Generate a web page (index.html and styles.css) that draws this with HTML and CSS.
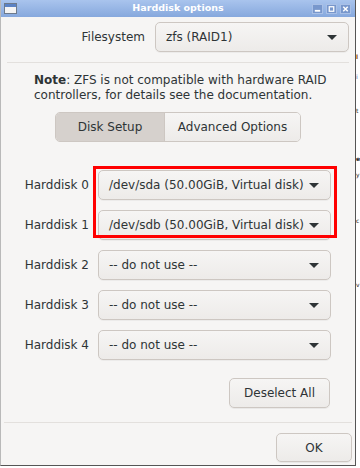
FILE: index.html
```html
<!DOCTYPE html>
<html lang="en">
<head>
  <meta charset="UTF-8">
  <title>Harddisk options</title>
  <link rel="stylesheet" href="styles.css">
</head>
<body>
  <div class="screen">
    <div class="window">
      <!-- Barra de titulo -->
      <div class="titlebar">
        <svg class="win-icon" width="13" height="11" viewBox="0 0 13 11">
          <rect x="0.5" y="0.5" width="12" height="10" fill="#f4f4f4" stroke="#6d7a8c"/>
          <rect x="1" y="1" width="11" height="3" fill="#5b82c4"/>
        </svg>
        <span class="title">Harddisk options</span>
        <div class="wm-buttons">
          <span class="wm-btn"><svg width="10" height="10" viewBox="0 0 10 10"><rect x="2" y="6" width="6" height="2" fill="#fff"/></svg></span>
          <span class="wm-btn"><svg width="10" height="10" viewBox="0 0 10 10"><rect x="2.5" y="2.5" width="5" height="5" fill="none" stroke="#fff" stroke-width="1.4"/></svg></span>
          <span class="wm-btn"><svg width="10" height="10" viewBox="0 0 10 10"><path d="M2.5 2.5 L7.5 7.5 M7.5 2.5 L2.5 7.5" stroke="#fff" stroke-width="1.6"/></svg></span>
        </div>
      </div>

      <div class="content">
        <div class="fs-row">
          <span class="label">Filesystem</span>
          <div class="combo fs-combo"><span>zfs (RAID1)</span><i class="arrow"></i></div>
        </div>

        <hr class="sep">

        <p class="note"><b>Note</b>: ZFS is not compatible with hardware RAID<br>controllers, for details see the documentation.</p>

        <div class="tabs">
          <span class="tab active">Disk Setup</span>
          <span class="tab">Advanced Options</span>
        </div>

        <div class="disks">
          <div class="hl-box"></div>
          <div class="disk-row"><span class="label">Harddisk 0</span><div class="combo"><span>/dev/sda (50.00GiB, Virtual disk)</span><i class="arrow"></i></div></div>
          <div class="disk-row"><span class="label">Harddisk 1</span><div class="combo"><span>/dev/sdb (50.00GiB, Virtual disk)</span><i class="arrow"></i></div></div>
          <div class="disk-row"><span class="label">Harddisk 2</span><div class="combo"><span>-- do not use --</span><i class="arrow"></i></div></div>
          <div class="disk-row"><span class="label">Harddisk 3</span><div class="combo"><span>-- do not use --</span><i class="arrow"></i></div></div>
          <div class="disk-row"><span class="label">Harddisk 4</span><div class="combo"><span>-- do not use --</span><i class="arrow"></i></div></div>
        </div>

        <div class="deselect-row">
          <span class="btn deselect">Deselect All</span>
        </div>
      </div>

      <hr class="sep bottom-sep">

      <div class="actions">
        <span class="btn ok">OK</span>
      </div>
    </div>

    <!-- Resto da pagina por tras da janela -->
    <div class="behind">
      <span class="c1">l</span>
      <span class="c2">i</span>
      <span class="c3">t</span>
      <span class="c4">e</span>
      <span class="c5">y</span>
      <span class="c6">c</span>
      <span class="c7">v</span>
    </div>
  </div>
</body>
</html>
```

FILE: styles.css
```css
* { margin:0; padding:0; box-sizing:border-box; }
html, body {
  width:360px; height:468px;
  overflow:hidden;
  background:#fff;
  font-family:"DejaVu Sans", sans-serif;
  font-size:12px;
  color:#2e3436;
}
.screen {
  display:flex;
  width:360px; height:468px;
}
/* Janela */
.window {
  width:356px; height:466px;
  flex:none;
  display:flex; flex-direction:column;
  background:#f6f5f4;
  border-left:1px solid #b9b9b9;
  border-right:1px solid #555;
  border-bottom:1px solid #555;
}
.titlebar {
  height:17px; flex:none;
  display:flex; align-items:center;
  padding:0 4px 0 3px;
  background:linear-gradient(#a9c4ed, #86a8dd);
  position:relative;
}
.win-icon { display:block; }
.title {
  position:absolute; left:0; right:0; top:2px;
  text-align:center;
  color:#fff; font-weight:bold; font-size:9.5px;
}
.wm-buttons { margin-left:auto; display:flex; gap:3px; }
.wm-btn {
  width:11px; height:10px;
  display:flex; align-items:center; justify-content:center;
  background:#7897cc;
  border:1px solid #a9c0e6;
}
.content { padding:5px 0 0 0; flex:1; }
/* Combos */
.combo {
  height:30px;
  display:flex; align-items:center;
  padding:0 11px 0 10px;
  border:1px solid #cdc7c2;
  border-radius:5px;
  background:linear-gradient(#f6f5f4, #edebe9);
  box-shadow:0 1px rgba(0,0,0,.04);
}
.combo span { flex:1; white-space:nowrap; }
.arrow {
  width:0; height:0;
  border-left:5px solid transparent;
  border-right:5px solid transparent;
  border-top:5px solid #2e3436;
}
.fs-row { display:flex; align-items:center; }
.fs-row .label { width:144px; text-align:right; }
.fs-combo { margin-left:10px; width:194px; }
.sep {
  border:none; border-top:1px solid #e3e0dd;
  margin:10px 6px 0 6px;
}
.note {
  margin-top:10px;
  padding-left:33px;
  line-height:15px;
}
.tabs {
  margin:9px 0 0 54px;
  display:flex;
  width:246px; height:30px;
  border:1px solid #cdc7c2;
  border-radius:5px;
  overflow:hidden;
}
.tab {
  display:flex; align-items:center; justify-content:center;
  background:linear-gradient(#f6f5f4, #edebe9);
  flex:1;
}
.tab.active {
  flex:none; width:109px;
  background:#d6d1cd;
  border-right:1px solid #cdc7c2;
}
/* Discos */
.disks {
  margin-top:28px;
  display:flex; flex-direction:column; gap:10px;
  position:relative;
}
.disk-row { display:flex; align-items:center; }
.disk-row .label { width:88px; text-align:right; }
.disk-row .combo { margin-left:9px; width:233px; }
.hl-box {
  position:absolute; left:92px; top:-4px;
  width:244px; height:72px;
  border:3px solid #f00;
  z-index:2;
}
.deselect-row { display:flex; justify-content:flex-end; padding-right:25px; margin-top:18px; }
.btn {
  height:30px;
  display:flex; align-items:center; justify-content:center;
  border:1px solid #cdc7c2;
  border-radius:5px;
  background:linear-gradient(#f6f5f4, #edebe9);
  box-shadow:0 1px rgba(0,0,0,.05);
}
.deselect { width:101px; }
.bottom-sep { margin:0 3px 0 3px; }
.actions { display:flex; justify-content:flex-end; padding:10px 3px 3px 0; }
.ok { width:76px; height:29px; }
/* Fundo atras */
.behind {
  flex:1;
  display:flex; flex-direction:column;
  font-size:6px; line-height:1;
  padding-left:0;
  overflow:hidden;
}
.behind span { display:block; }
.c1 { margin-top:54px; color:#8a4a00; font-weight:bold; }
.c2 { margin-top:14px; color:#2a5db0; }
.c3 { margin-top:28px; color:#222; }
.c4 { margin-top:42px; color:#222; font-weight:bold; }
.c5 { margin-top:10px; color:#222; }
.c6 { margin-top:40px; color:#222; }
.c7 { margin-top:58px; color:#222; }
```
